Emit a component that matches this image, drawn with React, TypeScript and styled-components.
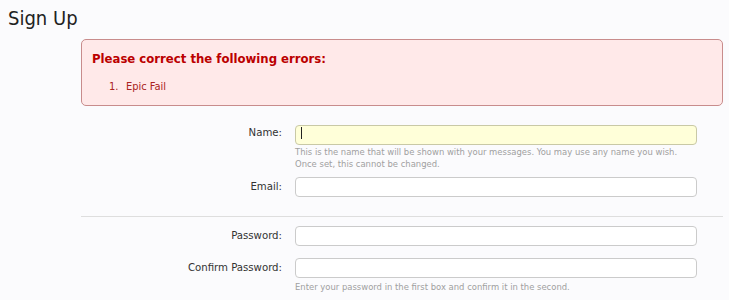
import React from "react";
import styled, { createGlobalStyle } from "styled-components";

const GlobalStyle = createGlobalStyle`
  html, body {
    margin: 0;
    padding: 0;
    background: #fbfbfd;
  }
  body {
    font-family: "DejaVu Sans", Tahoma, sans-serif;
    color: #333;
  }
`;

const narrow = `
  font-family: "DejaVu Sans Condensed", "DejaVu Sans", sans-serif;
  font-stretch: condensed;
`;

const Page = styled.div`
  padding: 6px 6px 0 8px;
`;

const Title = styled.h1`
  margin: 0;
  ${narrow}
  font-size: 20px;
  font-weight: normal;
  line-height: 24px;
  color: #222;
`;

const Form = styled.div`
  margin: 9px 0 0 73px;
  width: 642px;
`;

const ErrorBox = styled.div`
  box-sizing: border-box;
  height: 67px;
  padding: 9px 10px;
  background: #ffe9e9;
  border: 1px solid #c88c8c;
  border-radius: 5px;
  color: #b00;
`;

const ErrorTitle = styled.h3`
  margin: 0;
  ${narrow}
  font-size: 13px;
  font-weight: bold;
  line-height: 20px;
`;

const ErrorList = styled.ol`
  margin: 10px 0 0;
  padding-left: 17px;
  list-style: none;
  ${narrow}
  font-size: 11px;
  line-height: 16px;
  color: #a22;
`;

const ErrorItem = styled.li<{ $n: number }>`
  &::before {
    content: "${(p) => p.$n}.";
    display: inline-block;
    width: 17px;
  }
`;

const Fields = styled.div`
  padding-top: 17px;
`;

const Row = styled.div<{ $gap?: number }>`
  display: grid;
  grid-template-columns: 201px 402px;
  column-gap: 13px;
  margin-bottom: ${(p) => p.$gap ?? 12}px;
`;

const Label = styled.label`
  text-align: right;
  ${narrow}
  font-size: 11.3px;
  line-height: 20px;
  color: #333;
`;

const Control = styled.div`
  display: flex;
  flex-direction: column;
`;

const Field = styled.div`
  position: relative;
  height: 20px;
`;

const Input = styled.input<{ $focus?: boolean }>`
  box-sizing: border-box;
  width: 402px;
  height: 20px;
  margin: 0;
  padding: 0 6px;
  border: 1px solid ${(p) => (p.$focus ? "#c9c9a6" : "#cbcbcb")};
  border-radius: 4px;
  background: ${(p) => (p.$focus ? "#ffffd9" : "#ffffff")};
  font: inherit;
  font-size: 11px;
  outline: none;
  caret-color: transparent;
`;

const Caret = styled.span`
  position: absolute;
  left: 6px;
  top: 4px;
  width: 1px;
  height: 12px;
  background: #222;
`;

const Hint = styled.div`
  margin-top: 3px;
  ${narrow}
  font-size: 9.4px;
  line-height: 12px;
  color: #a0a0a0;
  white-space: nowrap;
`;

const Separator = styled.hr`
  margin: 0 0 9px;
  border: 0;
  border-top: 1px solid #dedede;
`;

export default function App() {
  return (
    <>
      <GlobalStyle />
      <Page>
        <Title>Sign Up</Title>
        <Form>
          <ErrorBox>
            <ErrorTitle>Please correct the following errors:</ErrorTitle>
            <ErrorList>
              <ErrorItem $n={1}>Epic Fail</ErrorItem>
            </ErrorList>
          </ErrorBox>
          <Fields>
            <Row $gap={7}>
              <Label>Name:</Label>
              <Control>
                <Field>
                  <Input $focus />
                  <Caret />
                </Field>
                <Hint>
                  This is the name that will be shown with your messages. You may use any name you wish.
                  <br />
                  Once set, this cannot be changed.
                </Hint>
              </Control>
            </Row>
            <Row $gap={19}>
              <Label>Email:</Label>
              <Control>
                <Input />
              </Control>
            </Row>
            <Separator />
            <Row>
              <Label>Password:</Label>
              <Control>
                <Input type="password" />
              </Control>
            </Row>
            <Row>
              <Label>Confirm Password:</Label>
              <Control>
                <Input type="password" />
                <Hint>Enter your password in the first box and confirm it in the second.</Hint>
              </Control>
            </Row>
          </Fields>
        </Form>
      </Page>
    </>
  );
}
